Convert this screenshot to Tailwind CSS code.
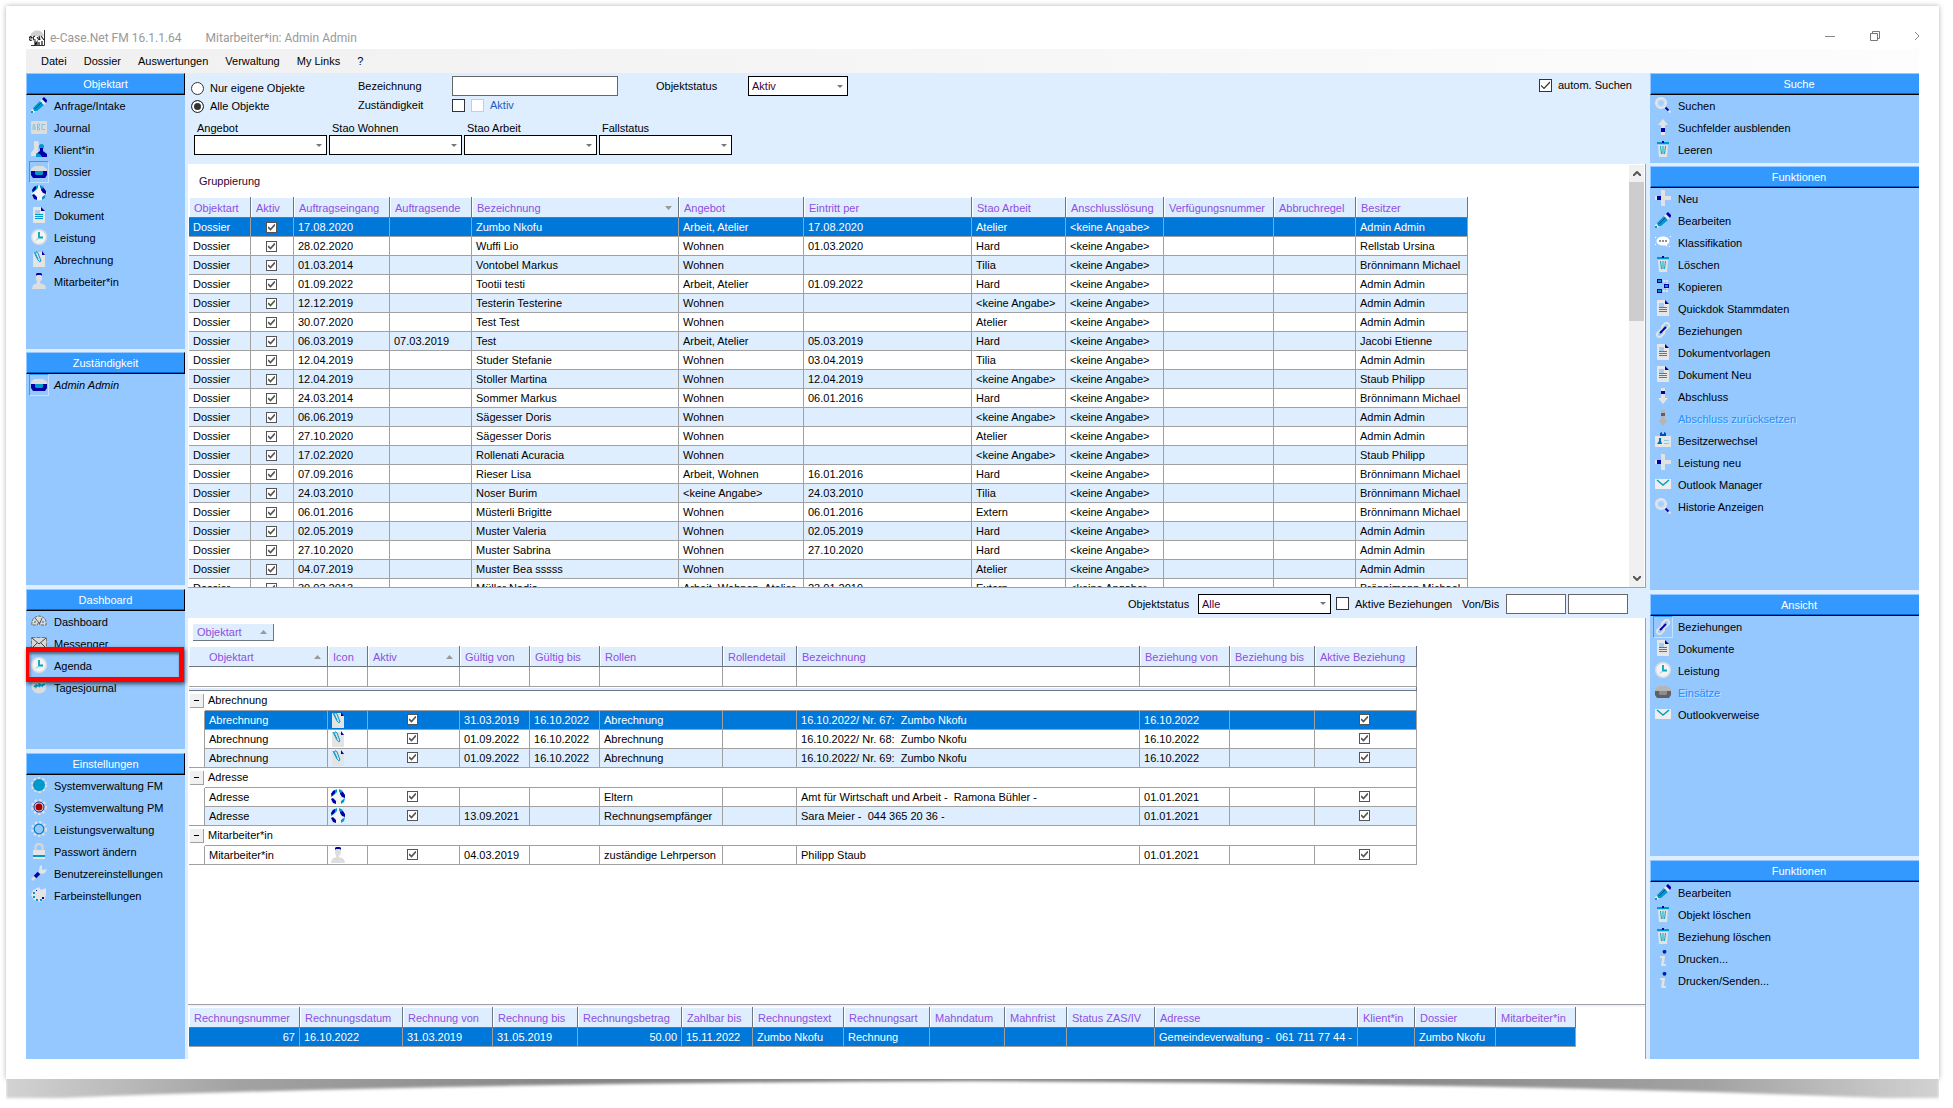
<!DOCTYPE html>
<html lang="de">
<head>
<meta charset="utf-8">
<title>e-Case.Net FM</title>
<script src="https://cdn.jsdelivr.net/npm/@tailwindcss/browser@4"></script>
</head>
<body class="flex h-screen flex-col overflow-hidden bg-white pt-[6px] pr-[14px] pl-[6px] font-['Liberation_Sans',sans-serif] text-[11px] leading-[18px] text-black">

<svg class="hidden" aria-hidden="true">
  <symbol id="pencil" viewBox="0 0 16 16"><path d="M0 16v-3l2-1 2 2-1 2z" fill="#e8e8e8"/><path d="M0 14h2v2H0z" fill="#0099cc"/><path d="M2 11 9 4l4 4-7 6H3z" fill="#0099cc"/><path d="M4 12 11 5" stroke="#004c99" stroke-width="1"/><path d="M9 4l2-2 4 4-2 2z" fill="#e8e8e8"/><path d="M11 2l2-2 3 3v1l-1 2z" fill="#0000a8"/></symbol>
  <symbol id="abc" viewBox="0 0 16 16"><rect y="2" width="16" height="13" rx="1" fill="#dcdcdc"/><path d="M2 11V7l1-2 1 2v4M2 9h2M6.500 5v6h2V9L7 8l1.500-1V5zM14 5.500h-3v5h3" fill="none" stroke="#7fc4e8" stroke-width="1"/></symbol>
  <symbol id="people" viewBox="0 0 16 16"><path d="M3 0h4l1 3-1 4v8H0v-3l3-4z" fill="#e2e2e2"/><circle cx="10.500" cy="5.500" r="2.500" fill="#0099cc"/><path d="M9 7h3v3l4 3v3H5v-3l4-3z" fill="#0000a8"/><path d="M7 12l3 2 1 2H5v-3z" fill="#0099cc"/></symbol>
  <symbol id="tray" viewBox="0 0 16 16"><path d="M2 3l2-1h8l4 3v2H0V5z" fill="#dedede"/><path d="M0 7h16v4l-2 3H2l-2-3z" fill="#0000a8"/><path d="M4 7h8v3l-1 1H5l-1-1z" fill="#0099cc"/></symbol>
  <symbol id="traygrey" viewBox="0 0 16 16"><path d="M2 3l2-1h8l4 3v2H0V5z" fill="#b5b5b5"/><path d="M0 7h16v4l-2 3H2l-2-3z" fill="#606060"/><path d="M4 7h8v3l-1 1H5l-1-1z" fill="#8c8c8c"/></symbol>
  <symbol id="globe" viewBox="0 0 16 16"><circle cx="8" cy="8" r="7.500" fill="#f2f4f6"/><path d="M3 2l4-2v3L4 6 1 8V5z" fill="#0099cc"/><path d="M3 2l2-1v3L2 7 1 5zM10 1l3 2 2 3v3l-3-1-2-3zM1 10l2-1 3 3v3l-3-1z" fill="#0000a8"/><path d="M9 0l4 2-2 2-2-1zM11 12l4-3-1 4-3 2z" fill="#0099cc"/></symbol>
  <symbol id="doc" viewBox="0 0 16 16"><path d="M2 0h8l4 4v12H2z" fill="#e6e6e6"/><path d="M10 0l4 4h-4z" fill="#0000a8"/><path d="M4 3h5v4H4z" fill="#a9cdf2"/><path d="M4 7.500h8M4 9.500h8M4 11.500h8" stroke="#0099cc"/></symbol>
  <symbol id="clock" viewBox="0 0 16 16"><circle cx="8" cy="8" r="8" fill="#dedede"/><circle cx="8" cy="8" r="6.500" fill="#f4f4f4"/><path d="M8 3v5.500h4" fill="none" stroke="#00a5bd" stroke-width="1.800"/><path d="M8 8.500 5 11.500" stroke="#6bc4d4" stroke-width="1"/></symbol>
  <symbol id="clip" viewBox="0 0 16 16"><path d="M2 1h9l3 3v12H2z" fill="#e4e4e4"/><path d="M11 0l3 4h-3z" fill="#0000a8"/><path d="M3 1l4 8q2 3 3 1L7 2q-1-2-2-1t0 3l2 4" fill="none" stroke="#0099cc"/></symbol>
  <symbol id="person" viewBox="0 0 16 16"><path d="M5 2l1-1h4l1 1v4L9 9v1l5 2 1 4H1l1-4 4-2V9L5 6z" fill="#dedede"/><path d="M5 3V1l1-1h4l1 1v2l-1-1H6z" fill="#0000a8"/></symbol>
  <symbol id="gauge" viewBox="0 0 16 16"><path d="M1 12q-1-8 7-9 8 1 7 9H9L8 9l-2 3z" fill="#d8dde2" stroke="#666" stroke-width="1" stroke-dasharray="3 1"/><path d="M4 5l5 6M11 5l-2 5M3 9h2M11 9h2" stroke="#555" stroke-width="1"/></symbol>
  <symbol id="mailx" viewBox="0 0 16 16"><path d="M.500 2.500h15v11H.500z" fill="#dadada" stroke="#777" stroke-dasharray="4 1"/><path d="M1 3l7 6 7-6M1 13l5-5M15 13l-5-5" fill="none" stroke="#444"/></symbol>
  <symbol id="mdk" viewBox="0 0 16 16"><circle cx="8" cy="7" r="7.500" fill="#dcdcdc"/><path d="M3 8l2-2v2l2-2M8 8V5l2 1-2 2M11 8l1-3M12 6l2-1" fill="none" stroke="#0099cc" stroke-width="1.400"/></symbol>
  <symbol id="gearfull" viewBox="0 0 16 16"><circle cx="8" cy="8" r="7" fill="none" stroke="#e0e0e0" stroke-width="2" stroke-dasharray="2.500 2"/><circle cx="8" cy="8" r="6" fill="#0099cc"/></symbol>
  <symbol id="gearred" viewBox="0 0 16 16"><circle cx="8" cy="8" r="6.700" fill="none" stroke="#e0e0e0" stroke-width="2.500" stroke-dasharray="2.500 2"/><circle cx="8" cy="8" r="5" fill="#e8e8e8" stroke="#222288"/><circle cx="8" cy="8" r="3.500" fill="#a00000"/></symbol>
  <symbol id="gear" viewBox="0 0 16 16"><circle cx="8" cy="8" r="6.700" fill="none" stroke="#e0e0e0" stroke-width="2.500" stroke-dasharray="2.500 2"/><circle cx="8" cy="8" r="4.800" fill="#94c8ff" stroke="#0080c0" stroke-width="1.200"/></symbol>
  <symbol id="lock" viewBox="0 0 16 16"><path d="M4.500 8V4q0-3 3.500-3t3.500 3v4" fill="none" stroke="#d8d8d8" stroke-width="2"/><path d="M2 7h12v9H2z" fill="#e4e4e4"/><path d="M2 12h12v2H2z" fill="#0099cc"/></symbol>
  <symbol id="wrench" viewBox="0 0 16 16"><path d="M1 15l9-9" stroke="#dcdcdc" stroke-width="3"/><path d="M4 12l4-4" stroke="#0000a8" stroke-width="3.500"/><path d="M8 5l1-4 2-1v4l1 1 4-1-2 4-4 1z" fill="#e4e4e4"/></symbol>
  <symbol id="palette" viewBox="0 0 16 16"><path d="M8 0l2 3 5-2v6l-1 5-5 3-6-2-3-5 2-5z" fill="#e4e4e4"/><path d="M2 5h2v2H2zM2 9h2v2H2zM5 12h2v2H5zM9 12h2v2H9z" fill="#0099cc"/><path d="M11 10h2v2h-2zM5 3h1v1H5z" fill="#0000a8"/></symbol>
  <symbol id="search" viewBox="0 0 16 16"><circle cx="6" cy="6" r="5" fill="#a4d0fb" stroke="#e6e6e6" stroke-width="2"/><circle cx="6" cy="6" r="3.500" fill="none" stroke="#dbe6f0" stroke-width="1"/><path d="M10 10l5.500 5.500" stroke="#e2e2e2" stroke-width="2"/><path d="M10.500 10.500l3 3" stroke="#0000a8" stroke-width="2"/></symbol>
  <symbol id="up" viewBox="0 0 16 16"><path d="M8 0l5 6h-3v10H6V6H3z" fill="#e4e4e4"/><path d="M6 9h4v4H6z" fill="#0000a8"/></symbol>
  <symbol id="down" viewBox="0 0 16 16"><path d="M8 16l5-6h-3V0H6v10H3z" fill="#e4e4e4"/><path d="M6 3h4v3H6z" fill="#0000a8"/></symbol>
  <symbol id="downgrey" viewBox="0 0 16 16"><path d="M8 16l5-6h-3V0H6v10H3z" fill="#b5b5b5"/><path d="M6 3h4v3H6z" fill="#606060"/></symbol>
  <symbol id="trash" viewBox="0 0 16 16"><path d="M3 4h10l-1 12H4z" fill="#e2e2e2"/><path d="M2 1h12v2H2z" fill="#0099cc"/><path d="M7 0h2v2H7z" fill="#0000a8"/><path d="M5.500 5l1 8M10.500 5l-1 8M8 5v8" stroke="#00a5bd" stroke-width="1"/></symbol>
  <symbol id="plus" viewBox="0 0 16 16"><path d="M6 0h4v6h6v4h-6v6H6v-6H0V6h6z" fill="#e2e2e2"/><path d="M2 6h4v4H2z" fill="#0000a8"/></symbol>
  <symbol id="bubble" viewBox="0 0 16 16"><ellipse cx="8" cy="7" rx="6.500" ry="4.500" fill="#fff"/><path d="M9 10h3v3z" fill="#fff"/><path d="M4 6h2v2H4zM7 6h2v2H7zM10 6h2v2h-2z" fill="#8a9099"/><path d="M0 3h1v1H0zM15 2h1v1h-1zM0 10h1v1H0zM14 12h1v1h-1z" fill="#fff"/></symbol>
  <symbol id="copy" viewBox="0 0 16 16"><path d="M8 3h4v3M8 13h4v-3" fill="none" stroke="#e2e2e2" stroke-dasharray="2 1" stroke-width="2"/><path d="M2 1h5v4H2zM9 6h5v4H9zM2 11h5v4H2z" fill="#0000a8"/><path d="M3 2h3v2H3zM10 7h3v2h-3zM3 12h3v2H3z" fill="#0099cc"/></symbol>
  <symbol id="link" viewBox="0 0 16 16"><rect x="8" y=".5" width="5" height="8" rx="2.500" transform="rotate(45 10.500 4.500)" fill="none" stroke="#e2e2e2" stroke-width="2"/><rect x="3" y="7.500" width="5" height="8" rx="2.500" transform="rotate(45 5.500 11.500)" fill="none" stroke="#e2e2e2" stroke-width="2"/><path d="M5 11l6-6" stroke="#0000a8" stroke-width="2"/></symbol>
  <symbol id="badge" viewBox="0 0 16 16"><path d="M0 4h16v11H0z" fill="#e6e6e6"/><path d="M5 4V1l2-1v2h2V0l2 1v3z" fill="#0050b0"/><path d="M2 12l2-3V6h2v3l1 3z" fill="#0070b0"/><path d="M9 8.500h5M9 11.500h5" stroke="#7fd0e8"/></symbol>
  <symbol id="mail" viewBox="0 0 16 16"><path d="M0 3h16v10H0z" fill="#ededed"/><path d="M2 4l6 5 6-5" fill="none" stroke="#00a0b8" stroke-width="1.500"/></symbol>
  <symbol id="info" viewBox="0 0 16 16"><circle cx="9.500" cy="1.800" r="1.900" fill="#0020b0"/><path d="M5 6h5L9 14h2v2H6l1-8H5z" fill="#e2e2e2"/></symbol>
</svg>

<div class="flex min-h-0 flex-1 flex-col bg-white px-5 pt-[14px] pb-5 shadow-[0_0_5px_rgba(0,0,0,0.3)]">
  <header class="flex h-[29px] shrink-0 items-center pt-[6px] pl-[3px] font-['Roboto',sans-serif] text-[12px] text-[#999]">
    <svg class="mr-[5px] size-4" viewBox="0 0 16 16" aria-hidden="true"><path d="M1 6q2-6 8-5.500Q14 1 15 6z" fill="#cfcfcf"/><path d="M15.500 0v15.500H2" fill="none" stroke="#333"/><path d="M0 8h3M0 8q2-3 3 0M0 9q1 2 3 1M6 6q-3 1-1 4h2M8 7l2 3M10 6l1 4M12 6l3 4" fill="none" stroke="#222" stroke-width="1.200"/><path d="M6 11v4l2-3v3M10 12v3M13 11v4" stroke="#111" stroke-width="1.200" fill="none"/></svg>
    <span>e-Case.Net FM 16.1.1.64</span>
    <span class="ml-6">Mitarbeiter*in: Admin Admin</span>
    <div class="ml-auto flex items-center gap-[35px] overflow-hidden pb-1">
      <button aria-label="Minimieren"><svg class="h-[10px] w-[10px]" viewBox="0 0 10 10"><path d="M0 5.500h10" stroke="#888"/></svg></button>
      <button aria-label="Wiederherstellen"><svg class="h-[10px] w-[10px]" viewBox="0 0 10 10"><path d="M.500 2.500h7v7h-7zM2.500 2V.500h7v7H8" fill="none" stroke="#777"/></svg></button>
      <button aria-label="Schliessen" class="flex w-[4px] overflow-hidden"><svg class="h-[10px] w-[10px] shrink-0" viewBox="0 0 10 10"><path d="M0 0l10 10M0 10 10 0" stroke="#888" transform="translate(-1 0)"/></svg></button>
    </div>
  </header>
  <nav class="flex h-6 shrink-0 items-center gap-[17px] bg-linear-to-r from-[#f0f0f0] to-[#fdfdfd] pl-[15px]">
    <button>Datei</button><button>Dossier</button><button>Auswertungen</button><button>Verwaltung</button><button>My Links</button><button>?</button>
  </nav>

  <div class="flex min-h-0 flex-1 bg-[#deeeff]">
    <aside id="left" class="flex w-[159px] shrink-0 flex-col"></aside>

    <main class="mx-[3px] flex min-w-0 flex-1 flex-col">
      <form class="flex h-[91px] shrink-0 flex-col">
        <div class="flex pt-[3px] pl-[3px]">
          <div class="grid w-[167px] grid-rows-[18px_18px] items-center pt-[3px]">
            <label class="flex items-center gap-[6px]"><input type="radio" name="scope" class="size-[13px] appearance-none rounded-full border border-[#333] bg-white checked:bg-[#333] checked:shadow-[inset_0_0_0_2px_#fff]">Nur eigene Objekte</label>
            <label class="flex items-center gap-[6px]"><input type="radio" name="scope" checked class="size-[13px] appearance-none rounded-full border border-[#333] bg-white checked:bg-[#333] checked:shadow-[inset_0_0_0_2px_#fff]">Alle Objekte</label>
          </div>
          <div class="grid w-[298px] grid-cols-[94px_1fr] grid-rows-[20px_18px] items-center">
            <label for="bez">Bezeichnung</label>
            <input id="bez" type="text" class="h-5 w-[166px] border border-[#666] bg-white px-1">
            <label for="zust">Zuständigkeit</label>
            <div class="flex items-center gap-[6px]">
              <input id="zust" type="checkbox" class="size-[13px] appearance-none border border-[#333] bg-white">
              <label class="flex items-center gap-[6px] text-[#1b5fb8]"><input type="checkbox" disabled class="size-[13px] appearance-none border border-[#ccc] bg-white">Aktiv</label>
            </div>
          </div>
          <div class="flex h-5 items-center">
            <label for="status" class="w-[92px]">Objektstatus</label>
            <div class="grid w-[100px] items-center"><select id="status" class="col-start-1 row-start-1 h-5 w-full appearance-none border border-black bg-white px-[3px] text-[#400040]"><option>Aktiv</option></select><svg class="pointer-events-none col-start-1 row-start-1 mr-[5px] h-[3px] w-[6px] justify-self-end" viewBox="0 0 6 3"><path d="M0 0h6L3 3z" fill="#777"/></svg></div>
          </div>
          <label class="mr-[14px] ml-auto flex h-[18px] items-center gap-[6px]"><span class="grid place-items-center"><input type="checkbox" checked class="col-start-1 row-start-1 size-[13px] appearance-none border border-[#333] bg-white"><svg class="pointer-events-none col-start-1 row-start-1 h-[9px] w-[9px]" viewBox="0 0 9 9"><path d="M0 4.500l3 3L9 1" fill="none" stroke="#333" stroke-width="1.200"/></svg></span>autom. Suchen</label>
        </div>
        <div id="filters" class="mt-[6px] flex gap-[2px] pl-[6px]"></div>
      </form>

      <section class="flex min-h-0 flex-[424] border-r border-b border-[#a0a0a0] bg-white">
        <div class="flex min-w-0 flex-1 flex-col overflow-hidden">
          <div class="h-[33px] shrink-0 pl-[11px] leading-[34px] text-[#300030]">Gruppierung</div>
          <div class="min-h-0 flex-1 overflow-hidden pl-px"><table id="t1" class="w-[1279px] table-fixed border-separate border-spacing-0 whitespace-pre"></table></div>
        </div>
        <div class="mt-px mr-px flex w-[15px] flex-col bg-[#f0f0f0]">
          <button type="button" aria-label="Nach oben" class="grid h-[17px] shrink-0 place-items-center"><svg class="h-[5px] w-2" viewBox="0 0 8 5"><path d="M0 5l4-4 4 4" fill="none" stroke="#555" stroke-width="2"/></svg></button>
          <div class="h-[139px] bg-[#cdcdcd]"></div>
          <button type="button" aria-label="Nach unten" class="mt-auto grid h-[17px] shrink-0 place-items-center"><svg class="h-[5px] w-2" viewBox="0 0 8 5"><path d="M0 0l4 4 4-4" fill="none" stroke="#555" stroke-width="2"/></svg></button>
        </div>
      </section>

      <form class="flex h-[30px] shrink-0 items-center justify-end pt-[2px] pr-[18px]">
        <label for="status2" class="w-[70px]">Objektstatus</label>
        <div class="grid w-[133px] items-center"><select id="status2" class="col-start-1 row-start-1 h-5 w-full appearance-none border border-black bg-white px-[3px] text-[#400040]"><option>Alle</option></select><svg class="pointer-events-none col-start-1 row-start-1 mr-[5px] h-[3px] w-[6px] justify-self-end" viewBox="0 0 6 3"><path d="M0 0h6L3 3z" fill="#777"/></svg></div>
        <label class="ml-[5px] flex w-[126px] items-center gap-[6px]"><input type="checkbox" class="size-[13px] appearance-none border border-[#333] bg-white">Aktive Beziehungen</label>
        <label for="von" class="w-[44px]">Von/Bis</label>
        <input id="von" type="text" class="mr-[2px] h-5 w-[60px] border border-[#666] bg-white">
        <input aria-label="Bis" type="text" class="h-5 w-[60px] border border-[#666] bg-white">
      </form>

      <section class="min-h-0 flex-[387] overflow-hidden border-r border-b border-[#a0a0a0] bg-white">
        <div class="pt-[6px] pl-px">
          <button type="button" class="mb-[5px] ml-1 flex h-[17px] w-[81px] items-center justify-between border-r border-b border-[#6d7681] bg-[#deeeff] pr-[6px] pl-1 text-[#8f4fe0]">Objektart<svg class="h-1 w-[7px]" viewBox="0 0 7 4"><path d="M0 4h7L3.500 0z" fill="#999"/></svg></button>
          <table id="t2" class="w-[1228px] table-fixed border-separate border-spacing-0 whitespace-pre"></table>
        </div>
      </section>

      <section class="h-[54px] shrink-0 overflow-hidden border-r border-[#a0a0a0] bg-white pl-px">
        <div class="h-[2px] bg-[#f0f4fa]"></div>
        <table id="t3" class="w-[1387px] table-fixed border-separate border-spacing-0 whitespace-pre"></table>
      </section>
    </main>

    <aside id="right" class="ml-px flex w-[269px] shrink-0 flex-col"></aside>
  </div>
</div>
<svg class="h-[29px] w-full shrink-0" viewBox="0 0 1933 29" preserveAspectRatio="none" aria-hidden="true">
  <defs>
    <linearGradient id="curl"><stop offset="0" stop-color="#d2d2d2"/><stop offset=".12" stop-color="#a2a2a2"/><stop offset=".3" stop-color="#858585"/><stop offset=".7" stop-color="#858585"/><stop offset=".88" stop-color="#a2a2a2"/><stop offset="1" stop-color="#d2d2d2"/></linearGradient>
    <filter id="soft" x="-1%" y="-50%" width="102%" height="200%"><feGaussianBlur stdDeviation="1.500"/></filter>
  </defs>
  <path d="M0-6H1933V19H1877Q1493 4 966 2Q440 4 56 19H0z" fill="url(#curl)" filter="url(#soft)"/>
</svg>

<script>
const icon = (n) => `<svg class="size-4" aria-hidden="true"><use href="#${n}"/></svg>`;

const panel = (p, rightSide) => `
  <section class="flex min-h-0 flex-col bg-[#94c8ff]" style="flex:${p.size}">
    <h2 class="h-[22px] shrink-0 border-t border-l border-b border-t-[#94c8ff] border-l-[#94c8ff] border-b-black ${rightSide ? 'pl-7' : 'border-r border-r-black'} bg-[#3399ff] text-center leading-5 text-white shadow-[inset_0_-1px_0_#0066cc]">${p.title}</h2>
    <ul>${p.items.map(([ic, text, state]) => `
      <li class="relative h-[22px]">
        <button class="flex h-[22px] items-center gap-[5px] pl-[3px] ${state === 'off' ? 'text-[#1e8fff] [text-shadow:1px_1px_0_#c4e2ff]' : ''} ${state === 'italic' ? 'italic' : ''}" ${state === 'off' ? 'disabled' : ''}>
          <span class="${state === 'on' || state === 'italic' ? 'grid h-[22px] w-5 place-items-center border border-t-[#3399ff] border-l-[#3399ff] border-r-[#c4e2ff] border-b-[#c4e2ff]' : 'grid h-[22px] w-5 place-items-center pb-[2px]'}">${icon(ic)}</span>${text}
        </button>
        ${state === 'mark' ? '<div class="pointer-events-none absolute -top-2 left-0 z-10 h-[35px] w-[158px] border-5 border-l-3 border-[#fe0000] shadow-[1px_2px_4px_rgba(0,0,0,0.6),inset_1px_2px_3px_rgba(0,0,0,0.5)]"></div>' : ''}
      </li>`).join('')}
    </ul>
  </section>`;
const gap3 = '<div class="h-[3px] shrink-0"></div>', gap4 = '<div class="h-1 shrink-0"></div>';

const L = [
  {size: 276, title: 'Objektart', items: [['pencil','Anfrage/Intake'],['abc','Journal'],['people','Klient*in'],['tray','Dossier','on'],['globe','Adresse'],['doc','Dokument'],['clock','Leistung'],['clip','Abrechnung'],['person','Mitarbeiter*in']]},
  {size: 233, title: 'Zuständigkeit', items: [['tray','Admin Admin','italic']]},
  {size: 160, title: 'Dashboard', items: [['gauge','Dashboard'],['mailx','Messenger'],['clock','Agenda','mark'],['mdk','Tagesjournal']]},
  {size: 306, title: 'Einstellungen', items: [['gearfull','Systemverwaltung FM'],['gearred','Systemverwaltung PM'],['gear','Leistungsverwaltung'],['lock','Passwort ändern'],['wrench','Benutzereinstellungen'],['palette','Farbeinstellungen']]}
].map(p => panel(p, false));
document.getElementById('left').innerHTML = L[0] + gap3 + L[1] + gap4 + L[2] + gap4 + L[3];

const R = [
  {size: 90, title: 'Suche', items: [['search','Suchen'],['up','Suchfelder ausblenden'],['trash','Leeren']]},
  {size: 424, title: 'Funktionen', items: [['plus','Neu'],['pencil','Bearbeiten'],['bubble','Klassifikation'],['trash','Löschen'],['copy','Kopieren'],['doc','Quickdok Stammdaten'],['link','Beziehungen'],['doc','Dokumentvorlagen'],['doc','Dokument Neu'],['down','Abschluss'],['downgrey','Abschluss zurücksetzen','off'],['badge','Besitzerwechsel'],['plus','Leistung neu'],['mail','Outlook Manager'],['search','Historie Anzeigen']]},
  {size: 262, title: 'Ansicht', items: [['link','Beziehungen','on'],['doc','Dokumente'],['clock','Leistung'],['traygrey','Einsätze','off'],['mail','Outlookverweise']]},
  {size: 199, title: 'Funktionen', items: [['pencil','Bearbeiten'],['trash','Objekt löschen'],['trash','Beziehung löschen'],['info','Drucken...'],['info','Drucken/Senden...']]}
].map(p => panel(p, true));
document.getElementById('right').innerHTML = R[0] + gap3 + R[1] + gap4 + R[2] + gap4 + R[3];

document.getElementById('filters').innerHTML = ['Angebot','Stao Wohnen','Stao Arbeit','Fallstatus'].map((t, i) => `
  <div class="w-[133px]"><label for="f${i}" class="block h-[14px] pl-[3px] leading-[14px]">${t}</label>
  <div class="grid items-center"><select id="f${i}" class="col-start-1 row-start-1 h-5 w-full appearance-none border border-black bg-white"><option></option></select><svg class="pointer-events-none col-start-1 row-start-1 mr-[5px] h-[3px] w-[6px] justify-self-end" viewBox="0 0 6 3"><path d="M0 0h6L3 3z" fill="#777"/></svg></div></div>`).join('');

const cols = (w) => `<colgroup>${w.map(x => `<col style="width:${x}px">`).join('')}</colgroup>`;
const tri = {
  down: '<svg class="h-1 w-[7px]" viewBox="0 0 7 4"><path d="M0 0h7L3.500 4z" fill="#999"/></svg>',
  up: '<svg class="h-1 w-[7px]" viewBox="0 0 7 4"><path d="M0 4h7L3.500 0z" fill="#999"/></svg>'
};
const th = (t, sort, span, indent) => `<th scope="col" ${span ? `colspan="${span}"` : ''} class="h-[21px] border-r border-b border-[#6d7681] bg-[#deeeff] px-0 pt-[2px] pb-0 text-left font-normal text-[#8f4fe0] shadow-[inset_1px_1px_0_#fff]"><div class="flex items-center justify-between ${indent ? 'pl-5' : 'pl-[5px]'} pr-[6px]">${t}${sort ? tri[sort] : ''}</div></th>`;
const box = '<span class="grid place-items-center"><input type="checkbox" checked aria-label="Aktiv" class="col-start-1 row-start-1 size-[11px] appearance-none border border-[#555] bg-white"><svg class="pointer-events-none col-start-1 row-start-1 h-[7px] w-[7px]" viewBox="0 0 7 7"><path d="M0 3l2.500 2.500L7 .500" fill="none" stroke="#555" stroke-width="1.700"/></svg></span>';
const td = (c) => {
  if (c === '#') return `<td class="h-[19px] border-r border-b border-[#a0a0a0] py-0 pr-[2px] pl-0">${box}</td>`;
  if (c.startsWith('@')) return `<td class="h-[19px] border-r border-b border-[#a0a0a0] py-0 pr-0 pl-[2px]"><span class="block h-4">${icon(c.slice(1))}</span></td>`;
  if (c.startsWith('>')) return `<td class="h-[19px] border-r border-b border-[#a0a0a0] px-1 py-0 text-right">${c.slice(1)}</td>`;
  return `<td class="h-[19px] border-r border-b border-[#a0a0a0] px-1 py-0">${c.replace('<', '&lt;')}</td>`;
};
const tone = (n) => n === 's' ? 'bg-[#0078d9] text-white' : n === 'b' ? 'bg-[#deeeff]' : 'bg-white';

/* Dossier list */
const K = '<keine Angabe>', W = 'Wohnen';
const rows1 = [
  ['17.08.2020','','Zumbo Nkofu','Arbeit, Atelier','17.08.2020','Atelier','Admin Admin'],
  ['28.02.2020','','Wuffi Lio',W,'01.03.2020','Hard','Rellstab Ursina'],
  ['01.03.2014','','Vontobel Markus',W,'','Tilia','Brönnimann Michael'],
  ['01.09.2022','','Tootii testi','Arbeit, Atelier','01.09.2022','Hard','Admin Admin'],
  ['12.12.2019','','Testerin Testerine',W,'',K,'Admin Admin'],
  ['30.07.2020','','Test Test',W,'','Atelier','Admin Admin'],
  ['06.03.2019','07.03.2019','Test','Arbeit, Atelier','05.03.2019','Hard','Jacobi Etienne'],
  ['12.04.2019','','Studer Stefanie',W,'03.04.2019','Tilia','Admin Admin'],
  ['12.04.2019','','Stoller Martina',W,'12.04.2019',K,'Staub Philipp'],
  ['24.03.2014','','Sommer Markus',W,'06.01.2016','Hard','Brönnimann Michael'],
  ['06.06.2019','','Sägesser Doris',W,'',K,'Admin Admin'],
  ['27.10.2020','','Sägesser Doris',W,'','Atelier','Admin Admin'],
  ['17.02.2020','','Rollenati Acuracia',W,'',K,'Staub Philipp'],
  ['07.09.2016','','Rieser Lisa','Arbeit, Wohnen','16.01.2016','Hard','Brönnimann Michael'],
  ['24.03.2010','','Noser Burim',K,'24.03.2010','Tilia','Brönnimann Michael'],
  ['06.01.2016','','Müsterli Brigitte',W,'06.01.2016','Extern','Brönnimann Michael'],
  ['02.05.2019','','Muster Valeria',W,'02.05.2019','Hard','Admin Admin'],
  ['27.10.2020','','Muster Sabrina',W,'27.10.2020','Hard','Admin Admin'],
  ['04.07.2019','','Muster Bea sssss',W,'','Atelier','Admin Admin'],
  ['30.03.2013','','Müller Nadia','Arbeit, Wohnen, Atelier','23.01.2019','Extern','Brönnimann Michael']
];
document.getElementById('t1').innerHTML = cols([62,43,96,82,207,125,168,94,98,110,82,112]) +
  '<thead><tr>' + ['Objektart','Aktiv','Auftragseingang','Auftragsende','Bezeichnung','Angebot','Eintritt per','Stao Arbeit','Anschlusslösung','Verfügungsnummer','Abbruchregel','Besitzer'].map((t, i) => th(t, i === 4 ? 'down' : '')).join('') + '</tr></thead><tbody>' +
  rows1.map((r, i) => `<tr class="${tone(i === 0 ? 's' : i % 2 ? 'w' : 'b')}">` + ['Dossier','#',...r.slice(0, 6),K,'','',r[6]].map(td).join('') + '</tr>').join('') + '</tbody>';

/* Relations, grouped by object type */
const groups = [
  ['Abrechnung', [
    ['s','@clip','31.03.2019','16.10.2022','Abrechnung','16.10.2022/ Nr. 67:  Zumbo Nkofu','16.10.2022'],
    ['w','@clip','01.09.2022','16.10.2022','Abrechnung','16.10.2022/ Nr. 68:  Zumbo Nkofu','16.10.2022'],
    ['b','@clip','01.09.2022','16.10.2022','Abrechnung','16.10.2022/ Nr. 69:  Zumbo Nkofu','16.10.2022']]],
  ['Adresse', [
    ['w','@globe','','','Eltern','Amt für Wirtschaft und Arbeit -  Ramona Bühler -','01.01.2021'],
    ['b','@globe','13.09.2021','','Rechnungsempfänger','Sara Meier -  044 365 20 36 -','01.01.2021']]],
  ['Mitarbeiter*in', [
    ['w','@person','04.03.2019','','zuständige Lehrperson','Philipp Staub','01.01.2021']]]
];
document.getElementById('t2').innerHTML = cols([16,123,40,92,70,70,123,74,343,90,85,102]) +
  '<thead><tr>' + th('Objektart', 'up', 2, true) + ['Icon','Aktiv','Gültig von','Gültig bis','Rollen','Rollendetail','Bezeichnung','Beziehung von','Beziehung bis','Aktive Beziehung'].map((t, i) => th(t, i === 1 ? 'up' : '')).join('') + '</tr></thead><tbody>' +
  '<tr><td colspan="2" class="h-5 border-r border-b border-[#a0a0a0] p-0"></td>' + '<td class="h-5 border-r border-b border-[#a0a0a0] p-0"></td>'.repeat(10) + '</tr>' +
  '<tr><td colspan="12" class="h-1 border-r border-b border-[#6d7681] bg-[#deeeff] p-0 shadow-[inset_0_1px_0_#fff]"></td></tr>' +
  groups.map(([name, rs]) =>
    `<tr><td class="h-5 p-0"><button type="button" aria-label="Gruppe ${name} schliessen" class="ml-px grid h-[14px] w-[14px] place-items-center border-r border-b border-[#a0a0a0] bg-[#f0f0f0]"><span class="h-px w-[5px] bg-black"></span></button></td><td colspan="11" class="h-5 border-r border-b border-[#a0a0a0] px-[3px] py-0">${name}</td></tr>` +
    rs.map((r, i) => `<tr class="${tone(r[0])}"><td class="h-[19px] border-r border-[#a0a0a0] bg-white p-0 ${i === rs.length - 1 ? 'border-b' : ''}"></td>` + [name, r[1], '#', r[2], r[3], r[4], '', r[5], r[6], '', '#'].map(td).join('') + '</tr>').join('')
  ).join('') + '</tbody>';

/* Invoice details */
document.getElementById('t3').innerHTML = cols([111,103,90,85,104,71,91,86,75,62,88,203,57,81,80]) +
  '<thead><tr>' + ['Rechnungsnummer','Rechnungsdatum','Rechnung von','Rechnung bis','Rechnungsbetrag','Zahlbar bis','Rechnungstext','Rechnungsart','Mahndatum','Mahnfrist','Status ZAS/IV','Adresse','Klient*in','Dossier','Mitarbeiter*in'].map(t => th(t)).join('') + '</tr></thead><tbody>' +
  `<tr class="${tone('s')}">` + ['>67','16.10.2022','31.03.2019','31.05.2019','>50.00','15.11.2022','Zumbo Nkofu','Rechnung','','','','Gemeindeverwaltung -  061 711 77 44 -','','Zumbo Nkofu',''].map(td).join('') + '</tr></tbody>';
</script>
</body>
</html>
